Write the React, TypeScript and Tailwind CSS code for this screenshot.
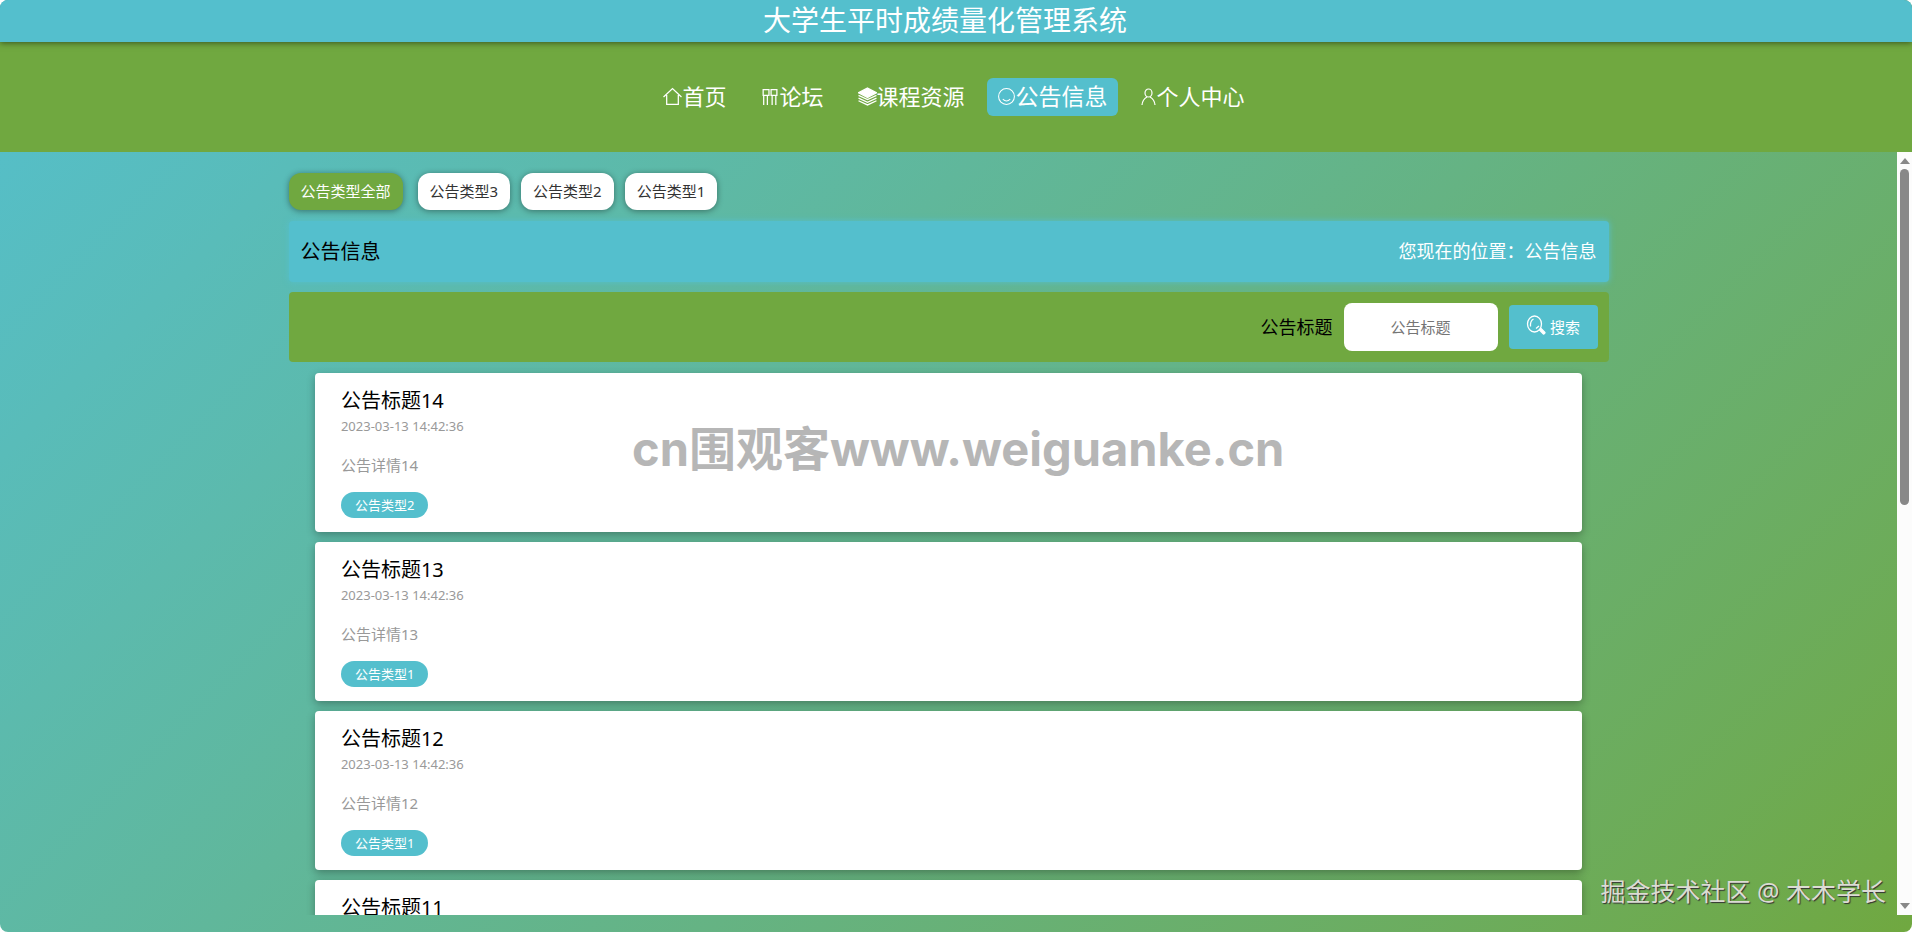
interface Notice {
  id: number;
  date: string;
  type: string;
}

const notices: Notice[] = [
  { id: 14, date: '2023-03-13 14:42:36', type: '公告类型2' },
  { id: 13, date: '2023-03-13 14:42:36', type: '公告类型1' },
  { id: 12, date: '2023-03-13 14:42:36', type: '公告类型1' },
  { id: 11, date: '2023-03-13 14:42:36', type: '公告类型1' }
];

const categories = ['公告类型3', '公告类型2', '公告类型1'];

const iconProps = {
  viewBox: '0 0 18 18',
  fill: 'none',
  stroke: 'currentColor',
  strokeWidth: 1.2,
  className: 'w-[19px] h-[19px] shrink-0'
};

function HomeIcon() {
  return (
    <svg {...iconProps}>
      <path d="M.5 9.500 9 1.500l8.500 8M3.500 7.500v9h11v-9" />
    </svg>
  );
}

function ForumIcon() {
  return (
    <svg {...iconProps}>
      <path d="M3 2.500h5.500v5.500H3zM10.500 2.500H16v5.500h-5.500zM3.500 8v9M7 8v9M11.500 8v9M15 8v9" />
    </svg>
  );
}

function LayersIcon() {
  return (
    <svg {...iconProps}>
      <path d="M9 1 17.500 5.500 9 10 .5 5.500z" fill="currentColor" />
      <path d="M.5 8 9 12l8.500-4M.5 10.500l8.500 4 8.500-4M.5 13 9 17l8.500-4" />
    </svg>
  );
}

function SmileIcon() {
  return (
    <svg {...iconProps} strokeWidth={1}>
      <circle cx="9" cy="9" r="7.500" />
      <path d="M5.500 11.500q3.500 3.500 7 0" />
    </svg>
  );
}

function UserIcon() {
  return (
    <svg {...iconProps} viewBox="0 0 17 18" className="w-[17px] h-[19px] shrink-0">
      <ellipse cx="8.500" cy="5.500" rx="3.500" ry="4" />
      <path d="M2 17.500q.5-5.500 5-8M10 9.500q4.500 2.500 5 8" />
    </svg>
  );
}

function SearchIcon() {
  return (
    <svg {...iconProps} viewBox="0 0 20 20" className="w-5 h-5 mb-1 shrink-0" strokeWidth={1.3}>
      <ellipse cx="8.500" cy="9" rx="7" ry="8" />
      <path d="M7.500 4Q4 6 4.500 11.500M10 13.500l3-2.500" />
      <path d="M13.500 15 15 13.500 19 17.500q0 1.500-1.500 1.500z" fill="currentColor" />
    </svg>
  );
}

const navItems = [
  { label: '首页', Icon: HomeIcon },
  { label: '论坛', Icon: ForumIcon },
  { label: '课程资源', Icon: LayersIcon },
  { label: '公告信息', Icon: SmileIcon, active: true },
  { label: '个人中心', Icon: UserIcon }
];

function NoticeCard({ notice }: { notice: Notice }) {
  return (
    <a
      href="#"
      className="flex flex-col items-start px-[26px] pt-[13px] pb-[14px] bg-white rounded shadow-[0_3px_8px_rgba(0,0,0,0.3)]"
    >
      <h3 className="text-[20px] leading-[30px] text-black">公告标题{notice.id}</h3>
      <time className="mt-[2px] text-[13px] leading-4 text-[#999]">{notice.date}</time>
      <p className="mt-[19px] text-[15px] leading-6 text-[#999]">公告详情{notice.id}</p>
      <span className="mt-[15px] px-[14px] rounded-full bg-[#54bfcd] text-[13px] leading-[26px] text-white">
        {notice.type}
      </span>
    </a>
  );
}

export default function App() {
  return (
    <div className="h-screen bg-white font-['Noto_Sans','Noto_Sans_CJK_SC',sans-serif]">
      <div className="relative flex flex-col h-full rounded-lg overflow-hidden bg-linear-135 from-[#54bfcd] to-[#70a840]">
        {/* Header */}
        <header className="relative z-10 flex items-start justify-center h-[42px] pr-[22px] shrink-0 bg-[#54bfcd] shadow-[0_1px_6px_rgba(0,0,0,0.5)]">
          <h1 className="text-[28px] leading-10 text-white">大学生平时成绩量化管理系统</h1>
        </header>

        <nav className="flex items-center justify-center gap-[10px] h-[110px] pr-1 shrink-0 bg-[#70a840] text-white">
          {navItems.map(({ label, Icon, active }) => (
            <a
              key={label}
              href="#"
              className={
                active
                  ? 'flex items-center h-[38px] px-[10px] pb-[2px] rounded-md bg-[#54bfcd] text-[23px]'
                  : 'flex items-center h-[38px] px-3 pb-[2px] text-[22px]'
              }
            >
              <Icon />
              {label}
            </a>
          ))}
        </nav>

        <div className="flex flex-1 min-h-0 mb-[17px]">
          <main className="flex-1 overflow-y-auto [scrollbar-width:none]">
            <div className="flex flex-col w-full max-w-[1320px] mx-auto pt-[21px]">
              {/* Categories */}
              <div className="flex gap-[11px] text-[15px] leading-[37px]">
                <button className="mr-1 px-3 rounded-xl bg-[#70a840] text-white shadow-[0_1px_6px_rgba(0,0,0,0.4)]">
                  公告类型全部
                </button>
                {categories.map((name) => (
                  <button
                    key={name}
                    className="px-3 rounded-xl bg-white text-[#333] shadow-[0_1px_6px_rgba(0,0,0,0.4)]"
                  >
                    {name}
                  </button>
                ))}
              </div>

              <div className="flex items-center justify-between h-[61px] mt-[11px] px-3 rounded bg-[#54bfcd] shadow-[0_0_6px_#54bfcd]">
                <h2 className="text-[20px] text-black">公告信息</h2>
                <span className="text-[18px] text-white">您现在的位置：公告信息</span>
              </div>

              <form className="flex items-center justify-end gap-[11px] h-[70px] mt-[10px] px-[11px] rounded bg-[#70a840]">
                <label htmlFor="title" className="text-[18px] text-black">
                  公告标题
                </label>
                <input
                  id="title"
                  type="text"
                  placeholder="公告标题"
                  className="w-[154px] h-12 rounded-lg bg-white text-center text-[15px] placeholder:text-[#757575]"
                />
                <button
                  type="button"
                  className="flex items-center justify-center gap-1 w-[89px] h-11 rounded bg-[#54bfcd] text-[15px] text-white"
                >
                  <SearchIcon />
                  搜索
                </button>
              </form>

              {/* Notices */}
              <div className="flex flex-col gap-[10px] mx-[2%] mt-[11px]">
                {notices.map((notice) => (
                  <NoticeCard key={notice.id} notice={notice} />
                ))}
              </div>
            </div>
          </main>

          {/* Scrollbar */}
          <div className="flex flex-col items-center justify-between w-[15px] py-[6px] bg-[#fcfcfc]">
            <svg viewBox="0 0 10 6" className="w-[10px] h-[6px]" fill="#888">
              <path d="M5 0 10 6H0z" />
            </svg>
            <div className="w-[9px] h-[336px] mt-[5px] mb-auto rounded-full bg-[#888]" />
            <svg viewBox="0 0 10 6" className="w-[10px] h-[6px]" fill="#888">
              <path d="M0 0h10L5 6z" />
            </svg>
          </div>
        </div>

        {/* Watermarks */}
        <div className="absolute left-[632px] top-[418px] font-['Inter','Noto_Sans_CJK_SC',sans-serif] font-bold text-[47px] leading-[62px] text-[#b6b6b6] whitespace-nowrap pointer-events-none">
          cn围观客www.weiguanke.cn
        </div>
        <div className="absolute right-[26px] bottom-[21px] text-[25px] leading-10 text-[#dcdcd4] [text-shadow:1px_1px_1px_#333] whitespace-nowrap pointer-events-none">
          掘金技术社区 @ 木木学长
        </div>
      </div>
    </div>
  );
}
